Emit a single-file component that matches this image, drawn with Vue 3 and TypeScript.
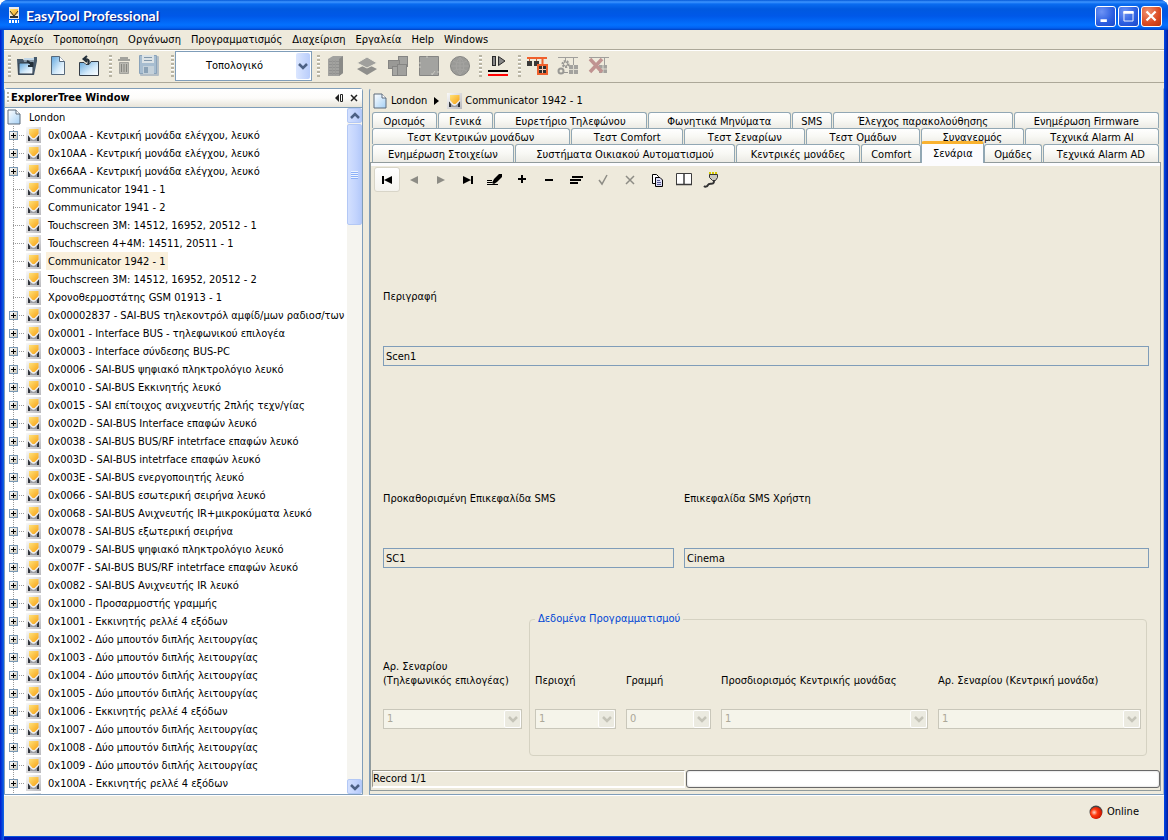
<script setup lang="ts">
import { ref } from 'vue'

interface TreeItem {
  label: string
  leaf?: boolean
}

interface Tab {
  label: string
  size: number
}

const menus: string[] = ['Αρχείο', 'Τροποποίηση', 'Οργάνωση', 'Προγραμματισμός', 'Διαχείριση', 'Εργαλεία', 'Help', 'Windows']

const tree: TreeItem[] = [
  { label: '0x00AA - Κεντρική μονάδα ελέγχου, λευκό' },
  { label: '0x10AA - Κεντρική μονάδα ελέγχου, λευκό' },
  { label: '0x66AA - Κεντρική μονάδα ελέγχου, λευκό' },
  { label: 'Communicator 1941 - 1', leaf: true },
  { label: 'Communicator 1941 - 2', leaf: true },
  { label: 'Touchscreen 3M: 14512, 16952, 20512 - 1', leaf: true },
  { label: 'Touchscreen 4+4M: 14511, 20511 - 1', leaf: true },
  { label: 'Communicator 1942 - 1', leaf: true },
  { label: 'Touchscreen 3M: 14512, 16952, 20512 - 2', leaf: true },
  { label: 'Χρονοθερμοστάτης GSM 01913 - 1', leaf: true },
  { label: '0x00002837 - SAI-BUS τηλεκοντρόλ αμφίδ/μων ραδιοσ/των' },
  { label: '0x0001 - Interface BUS - τηλεφωνικού επιλογέα' },
  { label: '0x0003 - Interface σύνδεσης BUS-PC' },
  { label: '0x0006 - SAI-BUS ψηφιακό πληκτρολόγιο λευκό' },
  { label: '0x0010 - SAI-BUS Εκκινητής λευκό' },
  { label: '0x0015 - SAI επίτοιχος ανιχνευτής 2πλής τεχν/γίας' },
  { label: '0x002D - SAI-BUS Interface επαφών λευκό' },
  { label: '0x0038 - SAI-BUS BUS/RF intetrface επαφών λευκό' },
  { label: '0x003D - SAI-BUS intetrface επαφών λευκό' },
  { label: '0x003E - SAI-BUS ενεργοποιητής λευκό' },
  { label: '0x0066 - SAI-BUS εσωτερική σειρήνα λευκό' },
  { label: '0x0068 - SAI-BUS Ανιχνευτής IR+μικροκύματα λευκό' },
  { label: '0x0078 - SAI-BUS εξωτερική σειρήνα' },
  { label: '0x0079 - SAI-BUS ψηφιακό πληκτρολόγιο λευκό' },
  { label: '0x007F - SAI-BUS BUS/RF intetrface επαφών λευκό' },
  { label: '0x0082 - SAI-BUS Ανιχνευτής IR λευκό' },
  { label: '0x1000 - Προσαρμοστής γραμμής' },
  { label: '0x1001 - Εκκινητής ρελλέ 4 εξόδων' },
  { label: '0x1002 - Δύο μπουτόν διπλής λειτουργίας' },
  { label: '0x1003 - Δύο μπουτόν διπλής λειτουργίας' },
  { label: '0x1004 - Δύο μπουτόν διπλής λειτουργίας' },
  { label: '0x1005 - Δύο μπουτόν διπλής λειτουργίας' },
  { label: '0x1006 - Εκκινητής ρελλέ 4 εξόδων' },
  { label: '0x1007 - Δύο μπουτόν διπλής λειτουργίας' },
  { label: '0x1008 - Δύο μπουτόν διπλής λειτουργίας' },
  { label: '0x1009 - Δύο μπουτόν διπλής λειτουργίας' },
  { label: '0x100A - Εκκινητής ρελλέ 4 εξόδων' },
]

const tabRows: Tab[][] = [
  [
    { label: 'Ορισμός', size: 64 },
    { label: 'Γενικά', size: 54 },
    { label: 'Ευρετήριο Τηλεφώνου', size: 154 },
    { label: 'Φωνητικά Μηνύματα', size: 143 },
    { label: 'SMS', size: 39 },
    { label: 'Έλεγχος παρακολούθησης', size: 181 },
    { label: 'Ενημέρωση Firmware', size: 146 },
  ],
  [
    { label: 'Τεστ Κεντρικών μονάδων', size: 199 },
    { label: 'Τεστ Comfort', size: 112 },
    { label: 'Τεστ Σεναρίων', size: 121 },
    { label: 'Τεστ Ομάδων', size: 113 },
    { label: 'Συναγερμός', size: 103 },
    { label: 'Τεχνικά Alarm AI', size: 134 },
  ],
  [
    { label: 'Ενημέρωση Στοιχείων', size: 142 },
    { label: 'Συστήματα Οικιακού Αυτοματισμού', size: 221 },
    { label: 'Κεντρικές μονάδες', size: 124 },
    { label: 'Comfort', size: 59 },
    { label: 'Σενάρια', size: 62 },
    { label: 'Ομάδες', size: 56 },
    { label: 'Τεχνικά Alarm AD', size: 116 },
  ],
]

const toolGroups: { id: string; name: string }[][] = [
  [
    { id: 'open', name: 'Open project' },
    { id: 'page', name: 'New' },
    { id: 'import', name: 'Import' },
  ],
  [
    { id: 'trash', name: 'Delete' },
    { id: 'disk', name: 'Save' },
  ],
]

const viewTools: string[] = ['building', 'layers', 'rooms', 'floor', 'globe']
const busTools: string[] = ['bus', 'busgear', 'busx']
const navTools: string[] = ['first', 'prev', 'next', 'last', 'edit', 'plus', 'minus', 'lines', 'check', 'cross', 'copy', 'book', 'plug']

const activeTab = ref('Σενάρια')
const selectedNode = ref('Communicator 1942 - 1')
const description = ref('Scen1')
const smsDefault = ref('SC1')
const smsUser = ref('Cinema')

const programming: { id: string; label: string; value: string }[] = [
  { id: 'area', label: 'Περιοχή', value: '1' },
  { id: 'line', label: 'Γραμμή', value: '0' },
  { id: 'unit', label: 'Προσδιορισμός Κεντρικής μονάδας', value: '1' },
  { id: 'scenario', label: 'Αρ. Σεναρίου (Κεντρική μονάδα)', value: '1' },
]
</script>

<template>
  <svg class="defs" aria-hidden="true">
    <defs>
      <linearGradient id="gPaper" x1="0" y1="0" x2="1" y2="1">
        <stop offset="0" stop-color="#fff" /><stop offset="1" stop-color="#a5d0f5" />
      </linearGradient>
      <linearGradient id="gFolder" x1="0" y1="0" x2="1" y2="1">
        <stop offset="0" stop-color="#5fa5dc" /><stop offset=".6" stop-color="#d4eafa" /><stop offset="1" stop-color="#fff" />
      </linearGradient>
      <linearGradient id="gGold" x1="0" y1="0" x2="1" y2="1">
        <stop offset="0" stop-color="#ffe27a" /><stop offset="1" stop-color="#f8a010" />
      </linearGradient>
      <linearGradient id="gSilver" x1="0" y1="0" x2="1" y2="1">
        <stop offset="0" stop-color="#fafafa" /><stop offset="1" stop-color="#b8b8bc" />
      </linearGradient>
      <radialGradient id="gRed" cx=".35" cy=".45" r=".6">
        <stop offset="0" stop-color="#ffd8c8" /><stop offset=".45" stop-color="#ff3a10" /><stop offset="1" stop-color="#d01800" />
      </radialGradient>
      <symbol id="device" viewBox="0 0 16 16">
        <rect x="0" y="0" width="15" height="16" fill="url(#gSilver)" />
        <path d="M2 8L6 14H2ZM13 8V14H9Z" fill="#30343c" />
        <path d="M4 12H11V14H4Z" fill="#9a9ca2" />
        <path d="M2 7L7 12H8L13 7" fill="none" stroke="#eeeef0" stroke-width="1.500" />
        <path d="M3 2H12.500V7L8.500 11H6.500L3 7Z" fill="url(#gGold)" />
      </symbol>
      <symbol id="doc" viewBox="0 0 14 16">
        <path d="M1 1H9L13 5V15H1Z" fill="url(#gPaper)" stroke="#5d6b7a" />
        <path d="M9 1V5H13" fill="#fff" stroke="#5d6b7a" />
      </symbol>
      <symbol id="i-open" viewBox="0 0 22 22">
        <path d="M1 4H7L8 6H17L18 2H21V6L18 20H2Z" fill="#46596b" />
        <path d="M8 3H18V7H8Z" fill="#c3d8e8" />
        <path d="M3 8H17V19H3Z" fill="url(#gFolder)" stroke="#343c46" />
        <path d="M3 8L5 6H19L17 19" fill="none" stroke="#46596b" />
        <path d="M11 6C13 7 15 8 16 11M12 11H16V7" fill="none" stroke="#24303a" stroke-width="2" />
      </symbol>
      <symbol id="i-page" viewBox="0 0 22 22">
        <path d="M4.500 1.500H12.500L17.500 6.500V19.500H4.500Z" fill="url(#gFolder)" stroke="#56697c" />
        <path d="M12.500 1.500V6.500H17.500" fill="#fff" stroke="#56697c" />
      </symbol>
      <symbol id="i-import" viewBox="0 0 22 22">
        <path d="M1.500 20.500V7.500H6L8 9.500H11L13 6.500H20.500V20.500Z" fill="url(#gFolder)" stroke="#343c46" />
        <path d="M10 9C12 5 10 4 6 4M9 1L5.500 4L9 7" fill="none" stroke="#24303a" stroke-width="2" />
      </symbol>
      <symbol id="i-trash" viewBox="0 0 22 22">
        <path d="M5 5H17M8 4V3H14V4" fill="none" stroke="#a3a39d" stroke-width="2" />
        <path d="M6.500 7.500H15.500V18.500H6.500Z" fill="#b9b8b1" stroke="#a3a39d" />
        <path d="M8.500 9V17M11 9V17M13.500 9V17" stroke="#85857f" />
      </symbol>
      <symbol id="i-disk" viewBox="0 0 22 22">
        <rect x="2" y="1" width="19" height="20" rx="1" fill="#b5bfc6" />
        <rect x="1" y="0" width="18" height="19" rx="1" fill="#8aa3ba" />
        <rect x="2" y="1" width="16" height="17" fill="#a7bdd0" />
        <rect x="4" y="0" width="12" height="8" fill="#dce3e6" />
        <path d="M6 2.500H14M6 5.500H14" stroke="#8197aa" />
        <rect x="5" y="11" width="11" height="8" fill="#c4d1da" />
        <rect x="6" y="12" width="4" height="6" fill="#8ba2b6" />
      </symbol>
      <symbol id="i-building" viewBox="0 0 22 22">
        <path d="M3 4L8 1H18V18L14 21H3Z" fill="#a2a29f" />
        <path d="M14 4L18 1V18L14 21Z" fill="#8a8a87" />
        <path d="M4 6.500H14M4 9.500H14M4 12.500H14M4 15.500H14M4 18.500H14" stroke="#919190" />
        <path d="M7.500 5V20M10.500 5V20" stroke="#9b9b98" />
      </symbol>
      <symbol id="i-layers" viewBox="0 0 22 22">
        <path d="M1 14L11 9L21 14L11 20Z" fill="#8f8f8c" />
        <path d="M1 8L11 2L21 8L11 13Z" fill="#a0a09d" stroke="#edeadc" />
      </symbol>
      <symbol id="i-rooms" viewBox="0 0 22 22">
        <rect x="11.500" y="1.500" width="9" height="10" fill="#a3a3a0" stroke="#858583" />
        <rect x="1.500" y="5.500" width="11" height="8" fill="#999996" stroke="#858583" />
        <rect x="5.500" y="11.500" width="7" height="9" fill="#a5a5a2" stroke="#858583" />
        <rect x="10.500" y="9.500" width="9" height="11" fill="#a0a09d" stroke="#858583" />
      </symbol>
      <symbol id="i-floor" viewBox="0 0 22 22">
        <path d="M1.500 1.500H20.500V20.500H1.500Z" fill="#a3a3a0" stroke="#858583" />
        <path d="M1 8H3M1 12H3M9 1V3M14 20V18M17 16L14 20M19 17H21" stroke="#c9c8c1" />
      </symbol>
      <symbol id="i-globe" viewBox="0 0 22 22">
        <circle cx="11" cy="11" r="9.500" fill="#9a9a97" stroke="#868684" />
        <path d="M11 2V20M2 11H20M4 6Q11 10 18 6M4 16Q11 12 18 16" fill="none" stroke="#a5a4a1" />
        <path d="M11 2Q3 11 11 20Q19 11 11 2Z" fill="none" stroke="#a5a4a1" />
      </symbol>
      <symbol id="i-play" viewBox="0 0 22 22">
        <rect x="5.500" y="1.500" width="3" height="9" fill="#888" stroke="#2b2b2b" />
        <path d="M11.500 1.500L18 6L11.500 10.500Z" fill="#888" stroke="#2b2b2b" />
        <rect x="1" y="15" width="20" height="2" fill="#000" />
        <rect x="1" y="19" width="20" height="2" fill="#f00" />
      </symbol>
      <symbol id="i-bus" viewBox="0 0 22 22">
        <path d="M1 3H21M16.500 3V11" stroke="#f0602c" fill="none" stroke-width="2" />
        <path d="M3.500 4V7M10.500 4V7" stroke="#c06848" />
        <rect x="1" y="6" width="5" height="5" fill="#393939" />
        <rect x="8" y="6" width="5" height="5" fill="#393939" />
        <rect x="12" y="10" width="9" height="9" fill="#f8cdb8" stroke="#f0602c" stroke-width="2" />
        <path d="M13 11H16V14H13ZM17 11H20V14H17ZM13 15H16V18H13ZM17 15H20V18H17Z" fill="#303030" />
      </symbol>
      <symbol id="i-busgear" viewBox="0 0 22 22">
        <path d="M1 2.500H21M16.500 3V10M8.500 3V6" stroke="#a09f9b" fill="none" />
        <circle cx="8.500" cy="9" r="3" fill="none" stroke="#999894" stroke-width="2" stroke-dasharray="2 1" />
        <circle cx="8.500" cy="9" r="2" fill="none" stroke="#999894" />
        <circle cx="4" cy="16" r="2.500" fill="none" stroke="#999894" stroke-width="2" />
        <path d="M7 17.500H11" stroke="#999894" />
        <rect x="12" y="10" width="9" height="9" fill="#a3a29e" />
        <path d="M16.500 10V19M12 14.500H21" stroke="#dedcd0" />
      </symbol>
      <symbol id="i-busx" viewBox="0 0 22 22">
        <path d="M1 2.500H21M16.500 3V10" stroke="#a09f9b" fill="none" />
        <rect x="11" y="10" width="8" height="8" fill="#a3a29e" />
        <path d="M15 10V18M11 14H19" stroke="#dedcd0" />
        <path d="M2 4L14 17M14 4L2 17" stroke="#c09391" stroke-width="3.500" />
      </symbol>
      <symbol id="i-first" viewBox="0 0 18 18"><path d="M4 5H6V13H4ZM14 5V13L6 9Z" fill="#000" /></symbol>
      <symbol id="i-prev" viewBox="0 0 18 18"><path d="M13 5V13L5 9Z" fill="#8d8c85" /></symbol>
      <symbol id="i-next" viewBox="0 0 18 18"><path d="M5 5V13L13 9Z" fill="#8d8c85" /></symbol>
      <symbol id="i-last" viewBox="0 0 18 18"><path d="M4 5V13L12 9ZM12 5H14V13H12Z" fill="#000" /></symbol>
      <symbol id="i-edit" viewBox="0 0 18 18">
        <path d="M1 9.500H6M1 13.500H12M1 11.500H6" stroke="#000" />
        <path d="M6 12L8 8L13 3H16V6L11 11L8 13Z" fill="#000" />
      </symbol>
      <symbol id="i-plus" viewBox="0 0 18 18"><path d="M5 8H13M9 4V12" stroke="#000" stroke-width="2" /></symbol>
      <symbol id="i-minus" viewBox="0 0 18 18"><path d="M5 9H13" stroke="#000" stroke-width="2" /></symbol>
      <symbol id="i-lines" viewBox="0 0 18 18"><path d="M5 6H16M3 9H14M3 12H11" stroke="#000" stroke-width="2" /></symbol>
      <symbol id="i-check" viewBox="0 0 18 18"><path d="M5 9L8 13L13 4" fill="none" stroke="#8d8c85" stroke-width="1.500" /></symbol>
      <symbol id="i-cross" viewBox="0 0 18 18"><path d="M5 5L13 13M13 5L5 13" stroke="#8d8c85" stroke-width="1.500" /></symbol>
      <symbol id="i-copy" viewBox="0 0 18 18">
        <path d="M4.500 3.500H8.500L10.500 5.500V12.500H4.500Z" fill="#fff" stroke="#000" />
        <path d="M7.500 6.500H12L14.500 9V15.500H7.500Z" fill="#dcdcf4" stroke="#000" />
        <path d="M9 9.500H12M9 11.500H13M9 13.500H13" stroke="#555a90" />
      </symbol>
      <symbol id="i-book" viewBox="0 0 18 18">
        <path d="M1.500 2.500H16.500V13.500H1.500Z" fill="#fff" stroke="#3c3c3c" />
        <path d="M9 3V14M1 13.500H17" stroke="#3c3c3c" stroke-width="1.500" />
      </symbol>
      <symbol id="i-plug" viewBox="0 0 18 18">
        <path d="M7 2H16" stroke="#d6cb00" stroke-width="2" stroke-dasharray="2 1" />
        <path d="M7.500 3.500H15.500V6.500L13.500 9.500H10.500L7.500 6.500Z" fill="#c9c7bd" stroke="#333" />
        <path d="M12 10C12 15 7 11 6 14C5 16 3 16 2 15" fill="none" stroke="#333" stroke-width="2" />
      </symbol>
      <symbol id="chev" viewBox="0 0 10 10"><path d="M1 3L5 7L9 3" fill="none" stroke="currentColor" stroke-width="2.500" /></symbol>
    </defs>
  </svg>

  <div class="window">
    <header class="titlebar">
      <svg class="app-icon" viewBox="0 0 12 18">
        <rect x="1" y="0" width="10" height="12" fill="#e9e9ee" />
        <path d="M2 2H10V6L7 9H5L2 6Z" fill="url(#gGold)" />
        <path d="M2 4L6 9L10 4" fill="none" stroke="#333" />
        <path d="M2 10H10" stroke="#333" stroke-width="2" />
        <path d="M1 14.500H11" stroke="#fff" stroke-width="3" stroke-dasharray="2 1" />
      </svg>
      <h1>EasyTool Professional</h1>
      <div class="win-buttons">
        <button type="button" aria-label="Minimize"><svg viewBox="0 0 21 21"><path d="M5 15H12" stroke="#fff" stroke-width="3" /></svg></button>
        <button type="button" aria-label="Maximize"><svg viewBox="0 0 21 21"><path d="M5.500 5V15.500H15.500V5M5 6H16" fill="none" stroke="#fff" /><path d="M5 6H16" stroke="#fff" stroke-width="3" /></svg></button>
        <button type="button" class="close" aria-label="Close"><svg viewBox="0 0 21 21"><path d="M5 5L15 15M15 5L5 15" stroke="#fff" stroke-width="2.500" /></svg></button>
      </div>
    </header>

    <div class="client">
      <nav class="menubar">
        <button v-for="m in menus" :key="m" type="button">{{ m }}</button>
      </nav>

      <div class="toolbar">
        <span class="grip"></span>
        <div class="group project">
          <button v-for="t in toolGroups[0]" :key="t.id" type="button" :aria-label="t.name"><svg><use :href="'#i-' + t.id" /></svg></button>
        </div>
        <span class="grip"></span>
        <div class="group file">
          <button v-for="t in toolGroups[1]" :key="t.id" type="button" :aria-label="t.name" disabled><svg><use :href="'#i-' + t.id" /></svg></button>
        </div>
        <span class="grip"></span>
        <div class="view-select">
          <select aria-label="View"><option>Τοπολογικό</option></select>
          <span class="drop"><svg><use href="#chev" /></svg></span>
        </div>
        <span class="grip"></span>
        <div class="group views">
          <button v-for="t in viewTools" :key="t" type="button" :aria-label="t" disabled><svg><use :href="'#i-' + t" /></svg></button>
        </div>
        <span class="grip"></span>
        <div class="group run">
          <button type="button" aria-label="Run"><svg><use href="#i-play" /></svg></button>
        </div>
        <span class="grip"></span>
        <div class="group views">
          <button v-for="t in busTools" :key="t" type="button" :aria-label="t"><svg><use :href="'#i-' + t" /></svg></button>
        </div>
      </div>

      <main class="workspace">
        <aside class="explorer">
          <div class="explorer-head">
            <span class="grip small"></span>
            <h2>ExplorerTree Window</h2>
            <button type="button" aria-label="Auto hide"><svg viewBox="0 0 10 10"><path d="M5 1V9L1 5Z" fill="#222" /><path d="M6.500 1.500H8.500V8.500H6.500Z" fill="none" stroke="#222" /></svg></button>
            <button type="button" aria-label="Close panel"><svg viewBox="0 0 10 10"><path d="M2 2L8 8M8 2L2 8" stroke="#222" stroke-width="1.500" /></svg></button>
          </div>
          <div class="explorer-body">
            <ul class="tree">
              <li class="root"><svg class="doc"><use href="#doc" /></svg><span class="node">London</span></li>
              <li v-for="item in tree" :key="item.label" :class="{ leaf: item.leaf }">
                <span class="branch">
                  <button v-if="!item.leaf" type="button" class="expander" aria-label="Expand"><svg viewBox="0 0 9 9"><path d="M2 4.500H7M4.500 2V7" stroke="#000" /></svg></button>
                </span>
                <svg class="device"><use href="#device" /></svg>
                <span class="node" :class="{ selected: item.label === selectedNode }" @click="selectedNode = item.label">{{ item.label }}</span>
              </li>
              <li class="leaf"><span class="branch"></span><svg class="device"><use href="#device" /></svg></li>
            </ul>
            <div class="scrollbar">
              <button type="button" class="up" aria-label="Scroll up"><svg><use href="#chev" /></svg></button>
              <div class="thumb"><i></i></div>
              <button type="button" class="down" aria-label="Scroll down"><svg><use href="#chev" /></svg></button>
            </div>
          </div>
        </aside>

        <section class="document">
          <div class="crumbs">
            <svg class="doc"><use href="#doc" /></svg>
            <span>London</span>
            <svg class="arrow" viewBox="0 0 5 8"><path d="M0 0V8L5 4Z" /></svg>
            <svg class="device"><use href="#device" /></svg>
            <span>Communicator 1942 - 1</span>
          </div>

          <div class="tabs" role="tablist">
            <div v-for="(row, i) in tabRows" :key="i" class="tab-row">
              <button
                v-for="tab in row"
                :key="tab.label"
                type="button"
                role="tab"
                :aria-selected="tab.label === activeTab"
                :class="{ active: tab.label === activeTab }"
                :style="{ flexGrow: tab.size }"
                @click="activeTab = tab.label"
              >{{ tab.label }}</button>
            </div>
          </div>

          <div class="page">
            <div class="navigator">
              <button v-for="(n, i) in navTools" :key="n" type="button" :aria-label="n" :class="{ hot: i === 0 }"><svg><use :href="'#i-' + n" /></svg></button>
            </div>

            <form class="form" @submit.prevent>
              <div class="field description">
                <label for="description">Περιγραφή</label>
                <input id="description" v-model="description" type="text" />
              </div>
              <div class="sms">
                <div class="field">
                  <label for="sms-default">Προκαθορισμένη Επικεφαλίδα SMS</label>
                  <input id="sms-default" v-model="smsDefault" type="text" />
                </div>
                <div class="field">
                  <label for="sms-user">Επικεφαλίδα SMS Χρήστη</label>
                  <input id="sms-user" v-model="smsUser" type="text" />
                </div>
              </div>
              <div class="numbers">
                <div class="choice dialer">
                  <label for="dialer">Αρ. Σεναρίου<br />(Τηλεφωνικός επιλογέας)</label>
                  <div class="combo">
                    <select id="dialer" disabled><option>1</option></select>
                    <span><svg><use href="#chev" /></svg></span>
                  </div>
                </div>
                <fieldset>
                  <legend>Δεδομένα Προγραμματισμού</legend>
                  <div class="programming">
                    <div v-for="p in programming" :key="p.id" class="choice">
                      <label :for="p.id">{{ p.label }}</label>
                      <div class="combo">
                        <select :id="p.id" disabled><option>{{ p.value }}</option></select>
                        <span><svg><use href="#chev" /></svg></span>
                      </div>
                    </div>
                  </div>
                </fieldset>
              </div>
            </form>

            <div class="record">
              <div class="count">Record 1/1</div>
              <div class="progress"></div>
            </div>
          </div>
        </section>
      </main>

      <footer class="status">
        <svg viewBox="0 0 14 14"><circle cx="7" cy="7" r="6.500" fill="#444" /><circle cx="7" cy="8" r="6" fill="url(#gRed)" /></svg>
        <span>Online</span>
      </footer>
    </div>
  </div>
</template>

<style>
body {
  margin: 0;
  background: #fff;
}
</style>

<style scoped>
.defs {
  position: absolute;
  width: 0;
  height: 0;
}

.window {
  box-sizing: border-box;
  display: flex;
  flex-direction: column;
  height: 100vh;
  min-height: 840px;
  overflow: hidden;
  border-radius: 8px 8px 0 0;
  background: linear-gradient(90deg, #0019cf 0, #0855dd 3px, #166aee 4px, #0855dd 50%, #0048e8 calc(100% - 4px), #001da0 100%);
  color: #000;
  font: 11px/14px "DejaVu Sans Condensed", Tahoma, "Noto Sans", sans-serif;
}

button {
  padding: 0;
  border: 0;
  background: none;
  color: inherit;
  font: inherit;
}

svg {
  display: block;
}

.titlebar {
  display: flex;
  flex: none;
  align-items: center;
  box-sizing: border-box;
  height: 30px;
  padding: 2px 6px 0 8px;
  background: linear-gradient(#0458d8 0, #3e95ff 2px, #0a6cf0 4px, #0059e0 9px, #0058e8 16px, #0371ff 25px, #0260f0 28px, #0040c0 30px);
}

.app-icon {
  width: 12px;
  height: 18px;
  margin-right: 6px;
}

h1 {
  flex: 1;
  margin: 0;
  color: #fff;
  font: bold 14px/18px Lato, "Trebuchet MS", sans-serif;
  text-shadow: 1px 1px 1px #0a1883;
}

.win-buttons {
  display: flex;
  gap: 2px;
}

.win-buttons button {
  box-sizing: border-box;
  width: 21px;
  height: 21px;
  border: 1px solid #fff;
  border-radius: 3px;
  background: radial-gradient(circle at 30% 25%, #6d93f5, #2a5de0 60%, #1c48c8);
}

.win-buttons .close {
  background: radial-gradient(circle at 30% 25%, #f0906f, #da4a22 60%, #b83410);
}

.win-buttons svg {
  width: 19px;
  height: 19px;
}

.client {
  display: flex;
  flex: 1;
  flex-direction: column;
  min-height: 0;
  margin: 0 4px 4px;
  background: #eeeadc;
  box-shadow: 0 1px #0855dd, 0 4px #0019b8;
}

.menubar {
  display: flex;
  flex: none;
  gap: 10px;
  box-sizing: border-box;
  height: 21px;
  padding: 2px 6px 0;
  border-bottom: 1px solid #fff;
  box-shadow: inset 0 -1px #aca899;
}

.menubar button {
  height: 16px;
}

.toolbar {
  display: flex;
  flex: none;
  align-items: center;
  box-sizing: border-box;
  height: 32px;
  padding: 0 0 2px 4px;
  border-bottom: 1px solid #aca899;
}

.grip {
  flex: none;
  width: 3px;
  height: 22px;
  background: repeating-linear-gradient(#b8b4a3 0 2px, #fff 2px 3px, transparent 3px 4px);
}

.grip.small {
  width: 2px;
  height: 12px;
}

.group {
  display: flex;
}

.group svg {
  width: 22px;
  height: 22px;
}

.project {
  gap: 9px;
  padding: 0 9px 0 5px;
}

.file {
  gap: 3px;
  padding: 0 11px 0 1px;
}

.views {
  gap: 9px;
  padding: 0 8px 0 5px;
}

.run {
  padding: 0 9px 0 5px;
}

.view-select {
  position: relative;
  width: 137px;
  height: 30px;
  margin: 0 5px 0 1px;
}

.view-select select {
  appearance: none;
  box-sizing: border-box;
  width: 100%;
  height: 100%;
  padding: 0 18px 0 0;
  border: 1px solid #7f9db9;
  border-radius: 0;
  background: #fff;
  color: #000;
  font: inherit;
  text-align: center;
  text-align-last: center;
}

.drop {
  position: absolute;
  inset: 2px 2px 2px auto;
  display: grid;
  place-items: center;
  width: 14px;
  border-radius: 2px;
  background: linear-gradient(90deg, #dbe6ff, #b9cdfb);
  color: #4d6185;
  pointer-events: none;
}

.drop svg {
  width: 10px;
  height: 10px;
}

.workspace {
  display: flex;
  flex: 1;
  gap: 6px;
  min-height: 0;
  padding-top: 5px;
}

.explorer {
  display: flex;
  flex: none;
  flex-direction: column;
  box-sizing: border-box;
  width: 359px;
  border: 1px solid #7f9db9;
  border-radius: 3px 3px 0 0;
  background: #fff;
}

.explorer-head {
  display: flex;
  flex: none;
  gap: 2px;
  align-items: center;
  box-sizing: border-box;
  height: 19px;
  padding: 0 3px 0 2px;
  border-bottom: 1px solid #7f9db9;
  background: linear-gradient(#fff, #fdfcfa 50%, #e7e4d9);
}

h2 {
  flex: 1;
  margin: 0;
  font-size: 11px;
  line-height: 14px;
}

.explorer-head svg {
  width: 10px;
  height: 10px;
}

.explorer-head button + button {
  margin-left: 3px;
}

.explorer-body {
  display: flex;
  flex: 1;
  min-height: 0;
}

.tree {
  flex: 1;
  min-width: 0;
  margin: 0;
  padding: 0 0 0 2px;
  overflow: hidden;
  list-style: none;
}

.tree li {
  display: flex;
  align-items: center;
  height: 18px;
  white-space: nowrap;
}

.root .doc {
  flex: none;
  width: 14px;
  height: 16px;
  margin-right: 6px;
}

.branch {
  display: flex;
  flex: none;
  align-items: center;
  width: 19px;
  height: 18px;
  background:
    repeating-linear-gradient(#999 0 1px, transparent 1px 2px) 6px 0 / 1px 18px no-repeat,
    repeating-linear-gradient(90deg, #999 0 1px, transparent 1px 2px) 6px 9px / 11px 1px no-repeat;
}

.expander {
  box-sizing: border-box;
  width: 9px;
  height: 9px;
  margin-left: 2px;
  border: 1px solid #7898b5;
  background: linear-gradient(135deg, #fff, #cbc6b8);
}

.expander svg {
  width: 9px;
  height: 9px;
  margin: -1px;
}

.tree .device {
  flex: none;
  width: 16px;
  height: 16px;
  margin-right: 4px;
}

.node {
  padding: 2px 2px 0;
  line-height: 16px;
}

.node.selected {
  background: #faf0dc;
}

.scrollbar {
  display: flex;
  flex: none;
  flex-direction: column;
  gap: 1px;
  width: 15px;
  background: #f5f4ef;
}

.scrollbar button,
.thumb {
  display: grid;
  place-items: center;
  box-sizing: border-box;
  width: 15px;
  border: 1px solid #b3c8f5;
  border-radius: 2px;
  background: linear-gradient(90deg, #d3e0fe, #c3d4fd 60%, #b5cafa);
  color: #4d6185;
}

.scrollbar button {
  height: 15px;
}

.scrollbar svg {
  width: 10px;
  height: 10px;
}

.scrollbar .up svg {
  transform: rotate(180deg);
}

.scrollbar .down {
  margin-top: auto;
}

.thumb {
  height: 101px;
}

.thumb i {
  width: 7px;
  height: 8px;
  background: repeating-linear-gradient(#eef4fe 0 1px, #8cb0f8 1px 2px);
}

.document {
  display: flex;
  flex: 1;
  flex-direction: column;
  min-width: 0;
  border: 1px solid #7f9db9;
  border-right-color: #aab9c6;
  border-top-color: transparent;
  border-radius: 3px 0 0 0;
}

.crumbs {
  display: flex;
  flex: none;
  align-items: center;
  height: 23px;
  padding-left: 3px;
}

.crumbs .doc {
  width: 14px;
  height: 16px;
  margin-right: 4px;
}

.crumbs .arrow {
  width: 5px;
  height: 8px;
  margin: 0 8px 0 7px;
}

.crumbs .device {
  width: 16px;
  height: 16px;
  margin-right: 2px;
}

.tabs {
  flex: none;
  padding: 0 4px 0 2px;
}

.tab-row {
  display: flex;
  gap: 1px;
  height: 16px;
}

.tab-row:last-child {
  height: 18px;
}

.tab-row button {
  flex: 1 1 0;
  box-sizing: border-box;
  min-width: 0;
  padding-top: 2px;
  border: 1px solid #91a7b4;
  border-bottom: 0;
  border-radius: 3px 3px 0 0;
  background: linear-gradient(#fff, #f8f8f4 50%, #ecebe5);
  line-height: 14px;
  white-space: nowrap;
}

.tab-row button.active {
  position: relative;
  z-index: 1;
  height: 22px;
  margin: -3px -1px 0;
  padding-top: 0;
  border-top: 3px solid #f9b231;
  background: #fcfcfe;
}

.page {
  display: flex;
  flex: 1;
  flex-direction: column;
  min-height: 0;
  margin: 0 2px 3px 0;
  border: 1px solid #919b9c;
  box-shadow: inset 0 3px #fcfcfe;
}

.navigator {
  display: flex;
  flex: none;
  gap: 1px;
  padding: 4px 0 0 3px;
}

.navigator button {
  display: grid;
  place-items: center;
  box-sizing: border-box;
  width: 26px;
  height: 25px;
}

.navigator .hot {
  border: 1px solid #d8d5c8;
  border-radius: 3px;
  background: linear-gradient(#fff, #f4f3ee);
}

.navigator svg {
  width: 18px;
  height: 18px;
}

.form {
  display: flex;
  flex: 1;
  flex-direction: column;
  justify-content: flex-end;
  min-height: 0;
  padding: 0 11px 14px 12px;
}

.field {
  display: flex;
  flex-direction: column;
  gap: 42px;
}

.field input {
  box-sizing: border-box;
  width: 100%;
  height: 20px;
  padding: 0 2px;
  border: 1px solid #7f9db9;
  border-radius: 0;
  background: #eeeadc;
  font: inherit;
  outline: 0;
}

.sms {
  display: grid;
  grid-template-columns: 291fr 465fr;
  gap: 10px;
  margin-top: 126px;
}

.numbers {
  display: grid;
  grid-template-columns: 139px 1fr;
  gap: 7px;
  margin-top: 44px;
}

fieldset {
  min-width: 0;
  margin: 0 2px 0 0;
  padding: 0 5px 26px;
  border: 1px solid #d5d2c2;
  border-radius: 4px;
}

legend {
  padding: 0 3px;
  color: #0046d5;
}

.programming {
  display: grid;
  grid-template-columns: 81fr 85fr 207fr 203fr;
  gap: 10px;
  padding-top: 48px;
}

.choice {
  display: flex;
  flex-direction: column;
  gap: 21px;
  min-width: 0;
  white-space: nowrap;
}

.dialer {
  padding-top: 48px;
}

.combo {
  position: relative;
  height: 20px;
}

.combo select {
  appearance: none;
  box-sizing: border-box;
  width: 100%;
  height: 20px;
  padding: 0 3px;
  border: 1px solid #c9c7ba;
  border-radius: 0;
  background: #f5f4ea;
  color: #aca899;
  font: inherit;
  opacity: 1;
}

.combo span {
  position: absolute;
  inset: 1px 1px 1px auto;
  display: grid;
  place-items: center;
  box-sizing: border-box;
  width: 17px;
  border: 1px solid #fff;
  border-radius: 2px;
  background: #ebeae0;
  color: #c5c4b8;
  pointer-events: none;
}

.combo svg {
  width: 10px;
  height: 10px;
}

.record {
  display: flex;
  flex: none;
  gap: 1px;
  height: 18px;
  margin: 0 0 2px 1px;
}

.count {
  flex: 313;
  box-sizing: border-box;
  border: 1px solid #fff;
  border-top-color: #9d9a8c;
  border-left-color: #9d9a8c;
  border-bottom-width: 2px;
  box-shadow: inset 0 1px #fff;
  line-height: 16px;
}

.progress {
  flex: 474;
  box-sizing: border-box;
  border: 1px solid #686868;
  border-radius: 3px;
  background: #fff;
  box-shadow: inset 0 0 2px #bbb;
}

.status {
  display: flex;
  flex: none;
  gap: 4px;
  align-items: center;
  justify-content: flex-end;
  box-sizing: border-box;
  height: 41px;
  padding: 0 25px 9px 0;
  border-top: 1px solid #fff;
}

.status svg {
  width: 14px;
  height: 14px;
}
</style>
